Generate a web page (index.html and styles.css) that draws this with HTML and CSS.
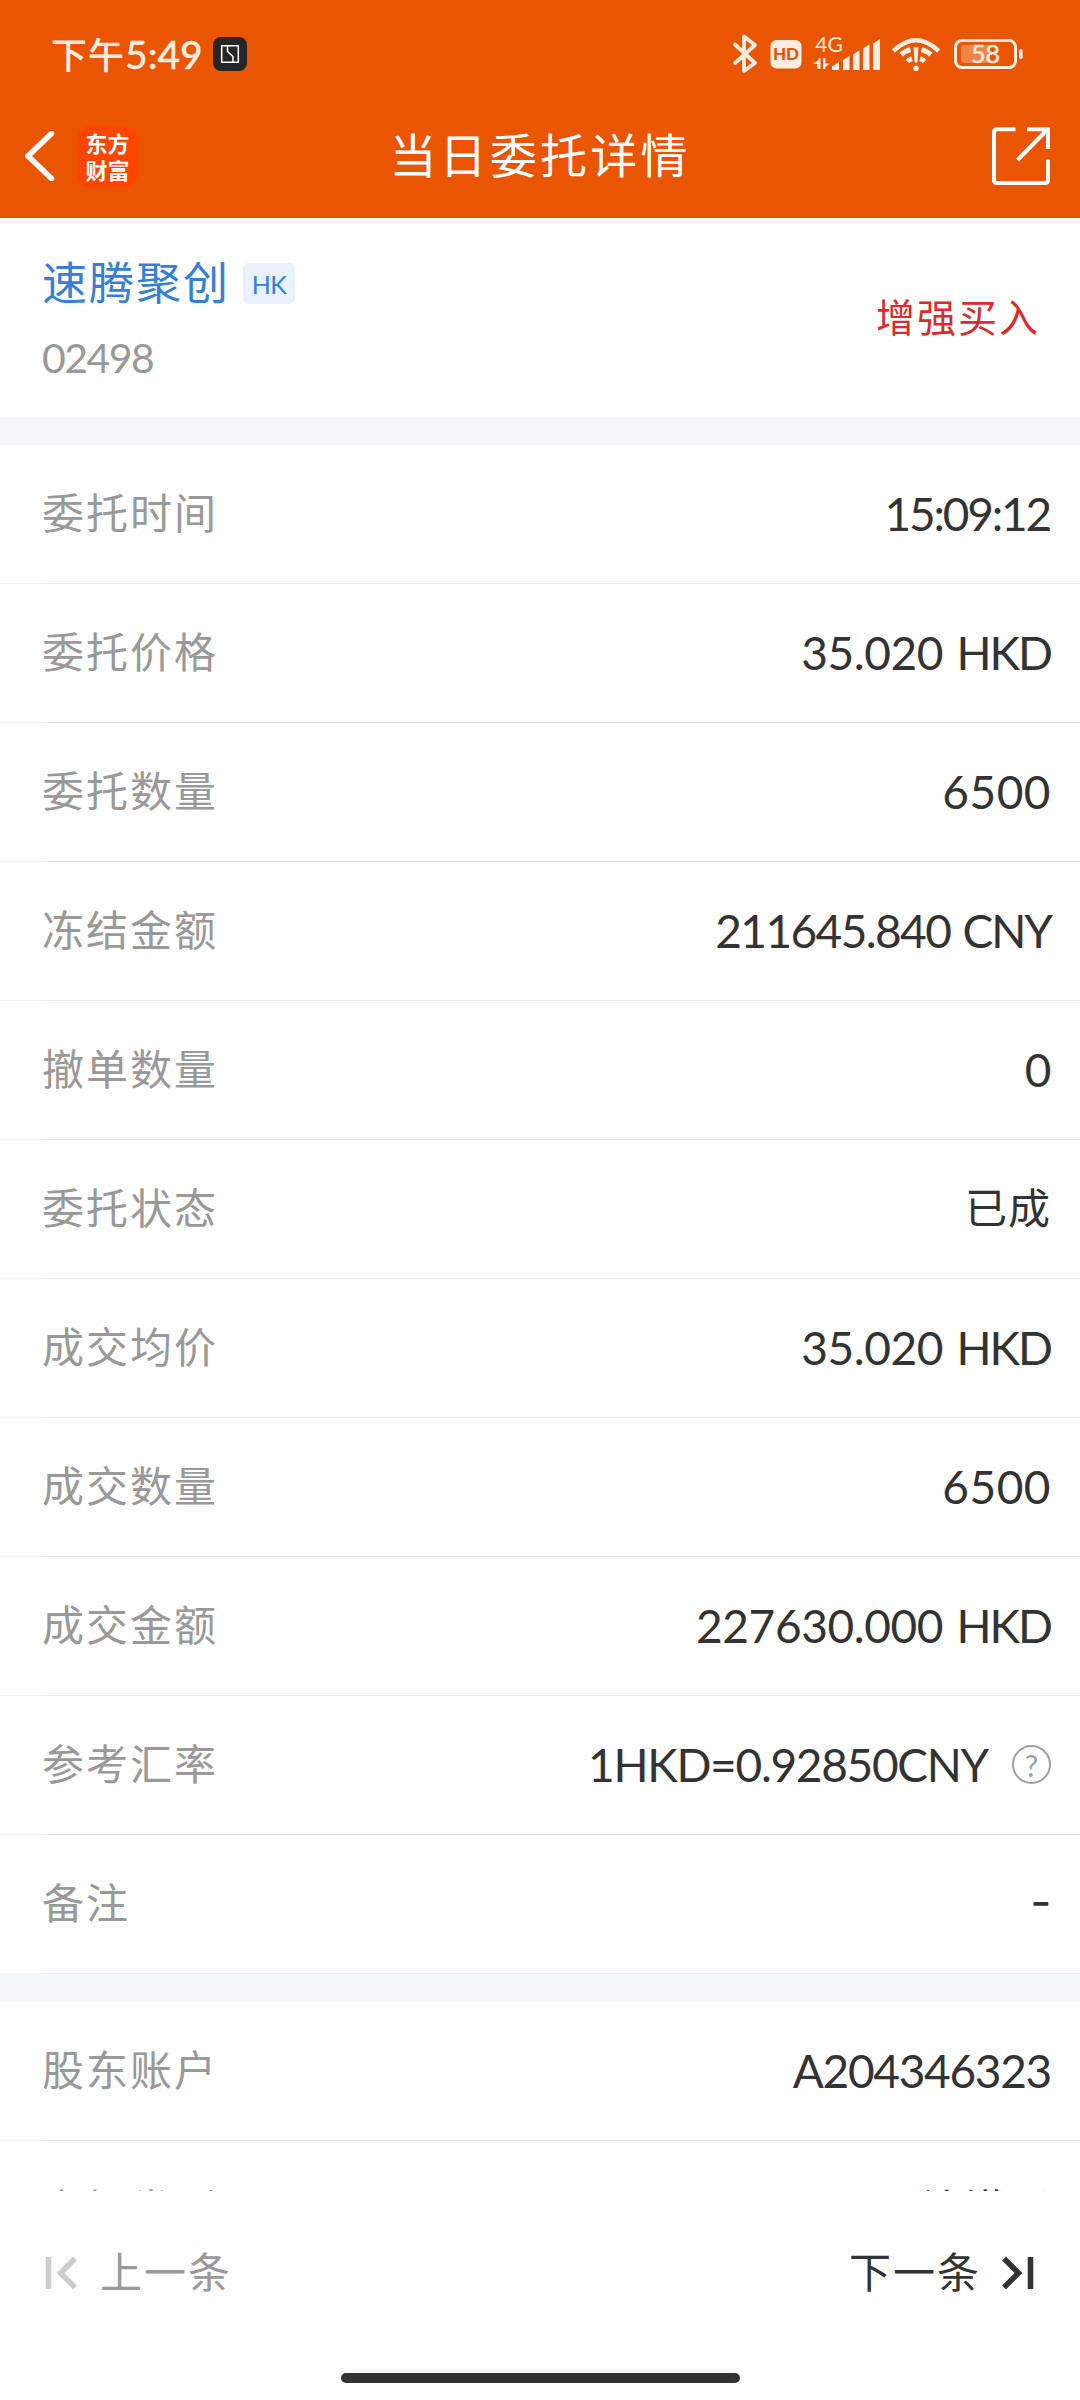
FILE: index.html
```
<!DOCTYPE html>
<html lang="zh-CN">
<head>
  <meta charset="UTF-8">
  <meta name="viewport" content="width=device-width, initial-scale=1">
  <title>当日委托详情</title>

  <link rel="stylesheet" href="styles.css">
</head>

<body>

<header class="header">
  <div class="status">
    <span class="status__time">下午<span class="status__digits">5:49</span></span>
    <svg class="status__nfc" width="34" height="34" viewBox="0 0 34 34">
      <rect width="34" height="34" rx="8" fill="#262626"/>
      <path d="M8.7 8.7h16.6v16.6H8.7zM14.500 9v5.500l5.500 5v5.500" fill="none" stroke="#fff" stroke-width="1.500"/>
    </svg>

    <svg class="status__icons" width="292" height="44" viewBox="732 32 292 44" fill="#ffede2">
      <!-- bluetooth -->
      <path d="M735 44.500l20 18.500-11 8V36.500l11 8.500-20 18" fill="none" stroke="#ffede2" stroke-width="3.800" stroke-linecap="round" stroke-linejoin="round"/>
      <!-- hd voice -->
      <rect x="770.500" y="40" width="31" height="28.500" rx="6"/>
      <text class="icon-text icon-text--hd" x="786" y="60">HD</text>
      <!-- mobile signal -->
      <text class="icon-text icon-text--net" x="829" y="52">4G</text>
      <path d="M819.500 59v9.500h-2.200V64h-4.300zM823 69V59h2.300v4.500h4.300zM819 58h1.500v11H818v-7zM823 58h2.400v11H823z"/>
      <path d="M832 70v-3.500l7-4.500v8zM843 70V60l6.500-4.200V70zM853 70V54.500l6.500-4.200V70zM863 70V48.500l6.500-4.200V70zM873 70V43.500l7-4.500v31z"/>
      <!-- wifi -->
      <path d="M895 49.500q21-18.500 42 0" fill="none" stroke="#ffede2" stroke-width="4.500" stroke-linecap="square"/>
      <path d="M901 54.500q4-3.500 9.500-5M931 54.500q-4-3.500-9.500-5M907.500 61.500q2-2 4.500-2.800M924.500 61.500q-2-2-4.500-2.800" fill="none" stroke="#ffede2" stroke-width="5"/>
      <path d="M913.500 47h5l-1 15.500h-3z"/>
      <circle cx="916" cy="68.300" r="2.800"/>
      <!-- battery -->
      <rect x="955.500" y="40.500" width="60" height="27" rx="6.500" fill="none" stroke="#ffede2" stroke-width="3"/>
      <rect x="961" y="45" width="29" height="18" rx="3" opacity=".3"/>
      <rect x="1019" y="49" width="3.700" height="10" rx="1.800"/>
      <text class="icon-text icon-text--battery" x="985.500" y="63">58</text>
    </svg>
  </div>

  <nav class="nav">
    <div class="nav__left">
      <svg class="nav__back" width="30" height="50" viewBox="0 0 30 50">
        <path d="M26.500 2.500L3 25l23.500 22.500" fill="none" stroke="#fff" stroke-width="5.500" stroke-linecap="round"/>
      </svg>
      <div class="nav__logo">东方<br>财富</div>
    </div>
    <h1 class="nav__title">当日委托详情</h1>
    <svg class="nav__share" width="58" height="58" viewBox="0 0 58 58">
      <path d="M23.500 2.200H5q-3 0-3 3V53q0 3 3 3h48q3 0 3-3V32.500M35 2.200h21V22M54.500 3.500L25.500 33" fill="none" stroke="#fff" stroke-width="4"/>
    </svg>
  </nav>
</header>

<main class="content">

  <section class="stock">
    <div>
      <div class="stock__line">
        <h2 class="stock__name">速腾聚创</h2>
        <span class="stock__market">HK</span>
      </div>
      <div class="stock__code">02498</div>
    </div>
    <div class="stock__side">增强买入</div>
  </section>

  <ul class="list">
    <li class="list__item"><span class="label">委托时间</span><span class="value value--time">15:09:12</span></li>
    <li class="list__item"><span class="label">委托价格</span><span class="value">35.020 <span class="unit">HKD</span></span></li>
    <li class="list__item"><span class="label">委托数量</span><span class="value value--count">6500</span></li>
    <li class="list__item"><span class="label">冻结金额</span><span class="value value--frozen">211645.840 <span class="unit">CNY</span></span></li>
    <li class="list__item"><span class="label">撤单数量</span><span class="value">0</span></li>
    <li class="list__item"><span class="label">委托状态</span><span class="value value--cjk">已成</span></li>
    <li class="list__item"><span class="label">成交均价</span><span class="value">35.020 <span class="unit">HKD</span></span></li>
    <li class="list__item"><span class="label">成交数量</span><span class="value value--count">6500</span></li>
    <li class="list__item"><span class="label">成交金额</span><span class="value">227630.000 <span class="unit">HKD</span></span></li>
    <li class="list__item">
      <span class="label">参考汇率</span>
      <span class="value value--rate">1HKD=0.92850CNY</span>
      <span class="help">?</span>
    </li>
    <li class="list__item"><span class="label">备注</span><span class="value value--empty">-</span></li>
  </ul>

  <ul class="list">
    <li class="list__item"><span class="label">股东账户</span><span class="value value--account">A204346323</span></li>
    <li class="list__item"><span class="label">市场类别</span><span class="value value--cjk">沪港通</span></li>
  </ul>

</main>

<footer class="footer">
  <div class="pager">
    <a class="pager__link pager__link--disabled">
      <svg width="32" height="34" viewBox="0 0 32 34">
        <path d="M3.500 1v32M30 2.500L15.500 17 30 31.500" fill="none" stroke="#ccc" stroke-width="5.500"/>
      </svg>
      <span class="pager__text">上一条</span>
    </a>
    <a class="pager__link pager__link--next">
      <span class="pager__text">下一条</span>
      <svg width="32" height="34" viewBox="0 0 32 34">
        <path d="M28.500 1v32M2 2.500L16.500 17 2 31.500" fill="none" stroke="#333" stroke-width="5.500"/>
      </svg>
    </a>
  </div>
  <div class="home-bar"></div>
</footer>

</body>
</html>
```

FILE: styles.css
```
* { box-sizing: border-box; }

body {
  display: flex;
  flex-direction: column;
  width: 1080px;
  height: 2400px;
  margin: 0;
  overflow: hidden;
  font-family: Lato, "Noto Sans CJK SC", sans-serif;
  color: #333;
  background-color: #fefefe;
}

ul,
h1,
h2 {
  margin: 0;
  padding: 0;
  font-weight: 400;
}


/* Header */

.header {
  height: 218px;
  flex: none;
  color: #fff;
  background-color: #ea5504;
}

.status {
  display: flex;
  align-items: center;
  height: 94px;
  padding: 14px 56px 0 51px;
  color: #ffede2;
}

.status__time {
  margin-top: -2px;
  font-family: "Noto Sans CJK SC", sans-serif;
  font-size: 36px;
  font-weight: 500;
  line-height: 50px;
  letter-spacing: 1px;
}

.status__digits {
  font-family: Lato, sans-serif;
  font-size: 39px;
  letter-spacing: 0;
  -webkit-text-stroke: .3px #ffede2;
}

.status__nfc { margin-left: 10px; }
.status__icons { margin-left: auto; }

.icon-text {
  font-family: Lato, sans-serif;
  text-anchor: middle;
}

.icon-text--hd {
  font-size: 17px;
  font-weight: 900;
  fill: #ea5504;
}

.icon-text--net { font-size: 21px; }

.icon-text--battery {
  font-size: 25px;
  stroke: #ffede2;
  stroke-width: .5px;
}

.nav {
  display: grid;
  grid-template-columns: 1fr auto 1fr;
  align-items: center;
  height: 124px;
  padding: 0 30px;
}

.nav__left {
  display: flex;
  align-items: center;
  gap: 22px;
  margin-left: -5px;
}

.nav__logo {
  width: 61px;
  height: 61px;
  padding-top: 3px;
  border-radius: 13px;
  font-family: "Noto Sans CJK SC", sans-serif;
  font-size: 22px;
  font-weight: 700;
  line-height: 27px;
  text-align: center;
  background-color: #ff4500;
}

.nav__title {
  margin-top: -2px;
  font-size: 47px;
  line-height: 60px;
  letter-spacing: 3.200px;
}

.nav__share { justify-self: end; }


/* Stock */

.content {
  flex: 1;
  min-height: 0;
  overflow: hidden;
}

.stock {
  display: flex;
  justify-content: space-between;
  height: 199px;
  padding: 35px 40px 0 42px;
}

.stock__line {
  display: flex;
  align-items: center;
  gap: 13px;
}

.stock__name {
  font-size: 45px;
  line-height: 60px;
  letter-spacing: 2px;
  color: #3480d8;
}

.stock__market {
  width: 52px;
  height: 41px;
  border-radius: 6px;
  font-size: 25px;
  line-height: 42px;
  text-align: center;
  letter-spacing: -.5px;
  color: #3480d8;
  background-color: #e8f1fc;
}

.stock__code {
  margin-top: 23px;
  font-size: 41px;
  line-height: 44px;
  letter-spacing: -1.500px;
  color: #999;
}

.stock__side {
  margin-top: 34px;
  font-size: 39px;
  line-height: 60px;
  letter-spacing: 2px;
  color: #db2b2b;
}


/* Details */

.list {
  border-top: 28px solid #f6f7fa;
  list-style: none;
}

.list__item {
  display: flex;
  align-items: center;
  height: 139px;
  padding: 0 29px 2px 42px;
  background: linear-gradient(to right, #f8f8f8 41px, #ececec 41px) bottom / 100% 1px no-repeat;
}

.label {
  margin-right: auto;
  padding-bottom: 1px;
  font-size: 42px;
  line-height: 60px;
  letter-spacing: 2px;
  color: #999;
}

.value {
  font-size: 46px;
  line-height: 60px;
  letter-spacing: -.4px;
  word-spacing: 2px;
}

.value--time {
  margin-right: 1px;
  letter-spacing: -2.200px;
}

.value--count { letter-spacing: .5px; }
.value--frozen { letter-spacing: -1.600px; }

.value--rate {
  margin-right: 1px;
  letter-spacing: -1.300px;
}

.value--account { letter-spacing: -1.300px; }

.value--empty {
  padding-bottom: 6px;
  font-family: Inter, sans-serif;
}

.value--cjk {
  padding-bottom: 1px;
  font-size: 42px;
  letter-spacing: 1px;
}

.unit { letter-spacing: -2px; }

.help {
  width: 39px;
  height: 39px;
  margin-left: 23px;
  border: 2px solid #a0a0a0;
  border-radius: 50%;
  font-size: 30px;
  line-height: 36px;
  text-align: center;
  color: #a0a0a0;
}


/* Footer */

.footer {
  flex: none;
  height: 209px;
}

.pager {
  display: flex;
  justify-content: space-between;
  height: 182px;
  padding: 52px 46px 0 45px;
}

.pager__link {
  display: flex;
  align-items: center;
  gap: 23px;
  height: 60px;
}

.pager__link--disabled { color: #999; }
.pager__link--next { gap: 21px; }

.pager__text {
  padding-bottom: 2px;
  font-size: 42px;
  line-height: 60px;
  letter-spacing: 2px;
}

.home-bar {
  width: 399px;
  height: 10px;
  margin: 0 auto;
  border-radius: 5px;
  background-color: #333;
}
```
